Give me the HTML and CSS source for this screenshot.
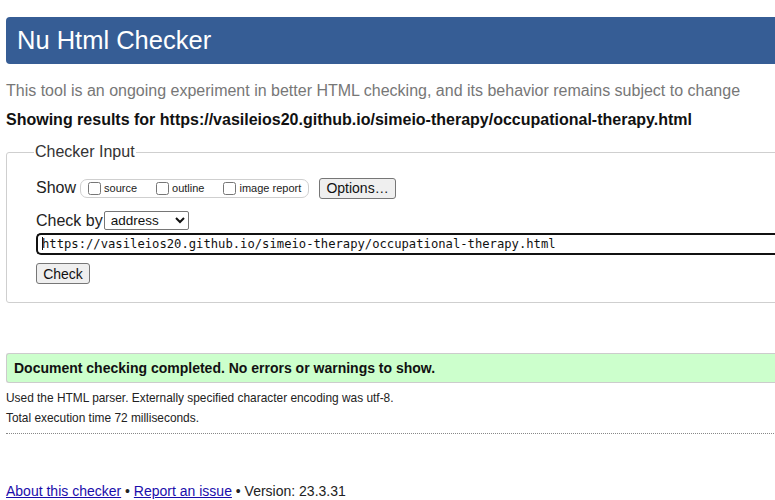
FILE: index.html
```html
<!DOCTYPE html>
<html>
<head>
<meta charset="utf-8">
<title>Nu Html Checker</title>
<link rel="stylesheet" href="styles.css">
</head>
<body>
<div class="page">
  <h1 class="header">Nu Html Checker</h1>
  <p class="intro">This tool is an ongoing experiment in better HTML checking, and its behavior remains subject to change</p>
  <p class="showing">Showing results for https://vasileios20.github.io/simeio-therapy/occupational-therapy.html</p>

  <fieldset class="checker">
    <legend class="legend">Checker Input</legend>
    <div class="row show-row">
      <span class="label">Show</span>
      <div class="opts">
        <label class="opt"><input type="checkbox" class="cb"><span>source</span></label>
        <label class="opt"><input type="checkbox" class="cb"><span>outline</span></label>
        <label class="opt"><input type="checkbox" class="cb"><span>image report</span></label>
      </div>
      <button class="btn btn-options" type="button">Options…</button>
    </div>
    <div class="row by-row">
      <span class="label">Check by</span>
      <select class="sel"><option>address</option></select>
    </div>
    <div class="url"><span class="caret"></span>https://vasileios20.github.io/simeio-therapy/occupational-therapy.html</div>
    <button class="btn btn-check" type="button">Check</button>
  </fieldset>

  <div class="success">Document checking completed. No errors or warnings to show.</div>
  <p class="details first">Used the HTML parser. Externally specified character encoding was utf-8.</p>
  <p class="details">Total execution time 72 milliseconds.</p>
  <hr class="dots">

  <p class="footer"><a href="#">About this checker</a> • <a href="#">Report an issue</a> • Version: 23.3.31</p>
</div>
</body>
</html>
```
FILE: styles.css
```css
html {
  overflow: hidden;
}
body {
  margin: 0;
  font-family: "Liberation Sans", Arial, sans-serif;
  color: #111;
  background: #fff;
}
.page {
  width: 800px;
  padding: 17px 0 0 6px;
}
.header {
  margin: 0;
  height: 47px;
  line-height: 47px;
  padding-left: 11px;
  background: #365d95;
  color: #fff;
  font-weight: normal;
  font-size: 25.5px;
  border-radius: 4px;
}
.intro {
  margin: 18px 0 0;
  font-size: 16px;
  line-height: 18px;
  color: #777;
}
.showing {
  margin: 11px 0 0;
  font-size: 16px;
  line-height: 18px;
  font-weight: bold;
  color: #111;
}
.checker {
  margin: 14px 0 0;
  padding: 9px 0 18px 29px;
  border: 1px solid #cfcfcf;
  border-radius: 3px;
}
.legend {
  padding: 0 1px;
  margin-left: -2px;
  font-size: 16px;
  color: #333;
}
.row {
  display: flex;
  align-items: center;
}
.label {
  font-size: 16px;
  color: #222;
}
.show-row {
  margin-top: 7px;
  height: 22px;
}
.opts {
  display: flex;
  align-items: center;
  margin-left: 4px;
  height: 19px;
  width: 229px;
  border: 1px solid #cfcfcf;
  border-radius: 7px;
  box-sizing: border-box;
  padding-left: 5px;
  white-space: nowrap;
}
.opt {
  display: flex;
  align-items: center;
  font-size: 11px;
  color: #222;
  margin-right: 17px;
}
.opt:last-child {
  margin-right: 0;
}
.cb {
  margin: 0 3px 0 2px;
  width: 13px;
  height: 13px;
}
.btn {
  font-family: "Liberation Sans", Arial, sans-serif;
  font-size: 14px;
  color: #111;
  background: #efefef;
  border: 1px solid #767676;
  border-radius: 3px;
  padding: 0 6px;
}
.btn-options {
  margin-left: 10px;
  width: 77px;
  height: 21px;
}
.by-row {
  margin-top: 12px;
}
.sel {
  margin-left: 1px;
  width: 85px;
  height: 19px;
  font-family: "Liberation Sans", Arial, sans-serif;
  font-size: 13.5px;
  color: #111;
  border: 1px solid #767676;
  border-radius: 2px;
  background: #fff;
  padding: 0 0 0 2px;
}
.url {
  margin-top: 3px;
  height: 22px;
  box-sizing: border-box;
  border: 2px solid #111;
  border-right: none;
  border-radius: 5px 0 0 5px;
  padding-left: 4px;
  font-family: "DejaVu Sans Mono", monospace;
  font-size: 12.2px;
  line-height: 18px;
  color: #111;
  white-space: nowrap;
}
.caret {
  display: inline-block;
  width: 1px;
  height: 13px;
  margin-right: -1px;
  background: #111;
  vertical-align: -2px;
}
.btn-check {
  display: block;
  margin-top: 8px;
  width: 54px;
  height: 21px;
}
.success {
  margin-top: 50px;
  height: 30px;
  box-sizing: border-box;
  border: 1px solid #cccccc;
  border-right: none;
  border-radius: 3px 0 0 3px;
  background: #ccffcc;
  padding-left: 7px;
  font-size: 14px;
  font-weight: bold;
  line-height: 28px;
  color: #111;
}
.details {
  margin: 5px 0 0;
  font-size: 11.9px;
  line-height: 15px;
  color: #222;
}
.details.first {
  margin-top: 8px;
}
.dots {
  margin: 7px 0 0;
  border: none;
  border-top: 1px dotted #888;
  height: 0;
}
.footer {
  margin: 49px 0 0;
  font-size: 14px;
  line-height: 17px;
  color: #222;
}
.footer a {
  color: #1a0dab;
}
```
